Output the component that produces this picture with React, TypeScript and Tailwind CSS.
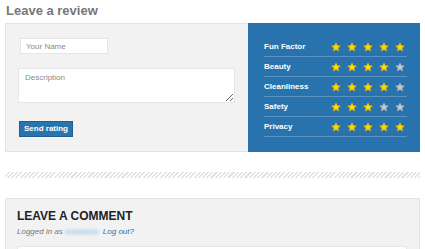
const ratings = [
  { label: "Fun Factor", value: 5 },
  { label: "Beauty", value: 4 },
  { label: "Cleanliness", value: 4 },
  { label: "Safety", value: 3 },
  { label: "Privacy", value: 5 },
];

const Star = ({ on }: { on: boolean }) => (
  <svg width="10" height="10" viewBox="0 0 24 24">
    <path
      d="M12 1.5l3.2 7.1 7.6.7-5.8 5.1 1.8 7.6L12 18l-6.8 4 1.8-7.6-5.8-5.1 7.6-.7z"
      fill={on ? "#ffd800" : "#c4c8cc"}
      stroke={on ? "#d9a800" : "#a0a4a8"}
      strokeWidth="1"
    />
  </svg>
);

export default function App() {
  return (
    <div className="w-[425px] h-[249px] overflow-hidden bg-white px-[5px] font-['Liberation_Sans',Arial,sans-serif]">
      <h2 className="pt-[3px] pl-[1px] text-[13px] leading-[16px] font-bold text-[#777]">Leave a review</h2>
      <div className="mt-[4px] flex h-[129px]">
        <div className="w-[243px] border border-[#e3e3e3] border-r-0 bg-[#f2f2f2] pl-[14px] pt-[14px]">
          <input
            className="block h-[16px] w-[88px] border border-[#e6e6e6] bg-white px-[5px] text-[8px] outline-none placeholder:text-[#8a8a8a]"
            placeholder="Your Name"
          />
          <textarea
            className="mt-[14px] -ml-[2px] block h-[35px] w-[217px] resize-y border border-[#e6e6e6] bg-white px-[6px] py-[3px] text-[8px] outline-none placeholder:text-[#8a8a8a]"
            placeholder="Description"
          />
          <button className="mt-[18px] -ml-[1px] h-[16px] w-[54px] border border-[#1d5f92] bg-[#2a73ad] text-[8px] font-bold text-white">
            Send rating
          </button>
        </div>
        <div className="flex-1 bg-[#2872ad] pt-[14px] pl-[16px] pr-[13px]">
          {ratings.map((r) => (
            <div key={r.label} className="flex h-[20px] items-center border-b border-[#5a93c2] text-[8px] font-bold text-white">
              <span className="w-[67px]">{r.label}</span>
              <div className="flex gap-[6px]">
                {[1, 2, 3, 4, 5].map((i) => (
                  <Star key={i} on={i <= r.value} />
                ))}
              </div>
            </div>
          ))}
        </div>
      </div>
      <div className="mt-[20px] h-[6px] bg-[repeating-linear-gradient(-45deg,#e2e2e2_0,#e2e2e2_1.5px,#ffffff_1.5px,#ffffff_3px)]" />
      <div className="mt-[20px] h-[60px] border border-[#e3e3e3] bg-[#f2f2f2] pl-[11px] pr-[12px] pt-[10px]">
        <h3 className="text-[12px] leading-[14px] font-bold text-[#222]">LEAVE A COMMENT</h3>
        <p className="mt-[3px] flex items-center text-[8px] italic text-[#777]">
          Logged in as
          <span className="ml-[2px] inline-block h-[6px] w-[34px] rounded-sm bg-[#cfe0ef] blur-[1px]" />
          <span className="ml-[4px] text-[#2a73ad]">Log out?</span>
        </p>
        <div className="mt-[8px] h-[20px] border border-[#e6e6e6] bg-white" />
      </div>
    </div>
  );
}
